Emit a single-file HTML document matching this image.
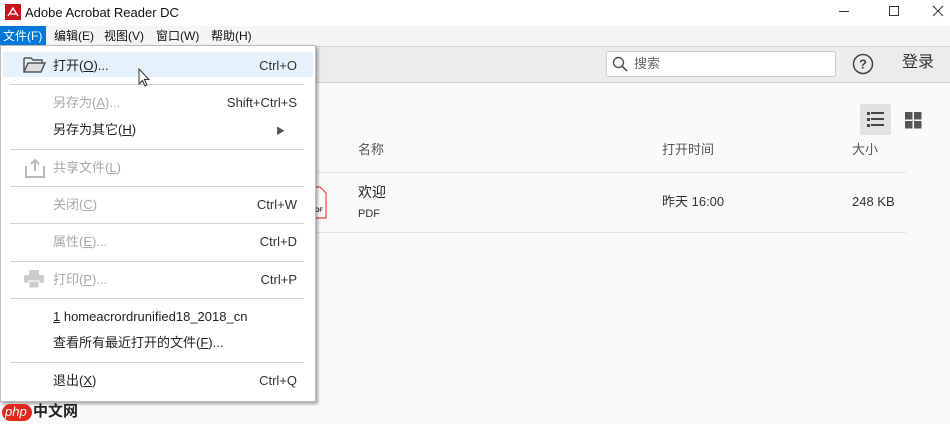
<!DOCTYPE html>
<html><head><meta charset="utf-8">
<style>
*{margin:0;padding:0;box-sizing:border-box}
body{width:950px;height:424px;overflow:hidden;background:#fafafa;font-family:"Liberation Sans","Noto Sans CJK SC",sans-serif;font-size:13px;color:#222;position:relative;line-height:16px}
.abs{position:absolute}
#title{left:0;top:0;width:950px;height:26px;background:#fff}
#menubar{left:0;top:26px;width:950px;height:20px;background:#f5f5f5}
#menubar span{position:absolute;top:2px;font-size:12px;color:#111}
#tool{left:0;top:46px;width:950px;height:37px;background:#ececec;border-top:1px solid #d8d8d8;border-bottom:1px solid #d4d4d4}
.txt{position:absolute;white-space:nowrap}
#menu{left:0;top:45px;width:316px;height:357px;background:#fff;border:1px solid #bbb;box-shadow:2px 2px 3px rgba(0,0,0,.35)}
.it{position:absolute;left:52px;font-size:13px;color:#222;white-space:nowrap}
.dis{color:#a8a8a8}
.sc{position:absolute;right:18px;font-size:13px;color:#333;white-space:nowrap}
.sep{position:absolute;left:9px;width:294px;height:1px;background:#d4d4d4}
u{text-decoration:underline}
</style></head><body>
<div id="title" class="abs">
  <svg class="abs" style="left:5px;top:4px" width="16" height="16"><rect width="16" height="16" fill="#c4161c"/><path d="M3 12 L8 4 L13 12 M5 10 L11 10" stroke="#fff" stroke-width="1.3" fill="none"/></svg>
  <span class="txt" style="left:25px;top:5px;font-size:13px;color:#111">Adobe Acrobat Reader DC</span>
  <div class="abs" style="left:839px;top:11px;width:10px;height:1px;background:#333"></div>
  <div class="abs" style="left:889px;top:6px;width:10px;height:10px;border:1px solid #333"></div>
  <svg class="abs" style="left:932px;top:5px" width="12" height="12"><path d="M1 1L11 11M11 1L1 11" stroke="#333" stroke-width="1"/></svg>
</div>
<div id="menubar" class="abs">
  <div class="abs" style="left:0;top:0;width:46px;height:20px;background:#0078d7"></div>
  <span style="left:3px;color:#fff">文件(F)</span>
  <span style="left:54px">编辑(E)</span>
  <span style="left:104px">视图(V)</span>
  <span style="left:156px">窗口(W)</span>
  <span style="left:211px">帮助(H)</span>
</div>
<div id="tool" class="abs">
  <div class="abs" style="left:606px;top:4px;width:230px;height:26px;background:#fff;border:1px solid #ccc;border-radius:3px"></div>
  <svg class="abs" style="left:612px;top:9px" width="16" height="16"><circle cx="6.5" cy="6.5" r="5" stroke="#555" stroke-width="1.4" fill="none"/><path d="M10 10L15 15" stroke="#555" stroke-width="1.6"/></svg>
  <span class="txt" style="left:634px;top:9px;font-size:13px;color:#666">搜索</span>
  <svg class="abs" style="left:852px;top:6px" width="22" height="22"><circle cx="11" cy="11" r="9.5" stroke="#444" stroke-width="1.5" fill="none"/><text x="11" y="15.5" font-size="13" text-anchor="middle" fill="#444" font-family="Liberation Sans" font-weight="bold">?</text></svg>
  <span class="txt" style="left:902px;top:6px;font-size:16px;line-height:20px;color:#333">登录</span>
</div>
<!-- content -->
<div class="abs" style="left:860px;top:104px;width:31px;height:31px;background:#e2e2e2;border-radius:2px"></div>
<svg class="abs" style="left:867px;top:111px" width="17" height="17"><g fill="#444"><rect x="0" y="1" width="3" height="3"/><rect x="4" y="1" width="13" height="2"/><rect x="0" y="7" width="3" height="3"/><rect x="4" y="7" width="13" height="2"/><rect x="0" y="13" width="3" height="3"/><rect x="4" y="13" width="13" height="2"/></g></svg>
<svg class="abs" style="left:905px;top:112px" width="17" height="17"><g fill="#555"><rect x="0" y="0" width="7.5" height="7.5"/><rect x="9" y="0" width="7.5" height="7.5"/><rect x="0" y="9" width="7.5" height="7.5"/><rect x="9" y="9" width="7.5" height="7.5"/></g></svg>
<span class="txt" style="left:358px;top:142px;color:#555">名称</span>
<span class="txt" style="left:662px;top:142px;color:#555">打开时间</span>
<span class="txt" style="left:852px;top:142px;color:#555">大小</span>
<div class="abs" style="left:316px;top:172px;width:590px;height:1px;background:#e4e4e4"></div>
<div class="abs" style="left:316px;top:232px;width:590px;height:1px;background:#e4e4e4"></div>
<svg class="abs" style="left:314px;top:186px" width="14" height="34"><path d="M0 1H6L12 7V32H0" stroke="#e44" stroke-width="1.2" fill="#fff"/><text x="1" y="26" font-size="6" font-family="Liberation Sans" font-weight="bold" fill="#333">DF</text></svg>
<span class="txt" style="left:358px;top:184px;font-size:14px;color:#222">欢迎</span>
<span class="txt" style="left:358px;top:206px;font-size:11px;color:#333">PDF</span>
<span class="txt" style="left:662px;top:194px;color:#333">昨天 16:00</span>
<span class="txt" style="left:852px;top:194px;color:#333">248 KB</span>
<!-- menu -->
<div id="menu" class="abs">
  <div class="abs" style="left:2px;top:6px;width:310px;height:25px;background:#e5f1fb"></div>
  <svg class="abs" style="left:22px;top:10px" width="24" height="18"><path d="M1 2H8L10 4H19V7" stroke="#555" stroke-width="1.5" fill="none"/><path d="M1 2V16H18L22 7H5L1 16" stroke="#555" stroke-width="1.5" fill="#ddd"/></svg>
  <span class="it" style="top:12px">打开(<u>O</u>)...</span><span class="sc" style="top:12px">Ctrl+O</span>
  <div class="sep" style="top:38px"></div>
  <span class="it dis" style="top:49px">另存为(<u>A</u>)...</span><span class="sc dis" style="top:49px">Shift+Ctrl+S</span>
  <span class="it" style="top:76px">另存为其它(<u>H</u>)</span><span class="sc" style="top:77px;right:30px;font-size:9px;color:#555">▶</span>
  <div class="sep" style="top:103px"></div>
  <svg class="abs" style="left:24px;top:112px" width="20" height="20"><path d="M1 8V19H19V8" stroke="#bbb" stroke-width="2" fill="none"/><path d="M10 13V2M6 6L10 2L14 6" stroke="#bbb" stroke-width="2" fill="none"/></svg>
  <span class="it dis" style="top:114px">共享文件(<u>L</u>)</span>
  <div class="sep" style="top:140px"></div>
  <span class="it dis" style="top:151px">关闭(<u>C</u>)</span><span class="sc dis" style="top:151px">Ctrl+W</span>
  <div class="sep" style="top:177px"></div>
  <span class="it dis" style="top:188px">属性(<u>E</u>)...</span><span class="sc dis" style="top:188px">Ctrl+D</span>
  <div class="sep" style="top:215px"></div>
  <svg class="abs" style="left:23px;top:224px" width="20" height="18"><rect x="5" y="0" width="10" height="5" fill="#ccc"/><rect x="0" y="5" width="20" height="8" rx="2" fill="#ccc"/><rect x="5" y="11" width="10" height="7" fill="#ccc" stroke="#fff" stroke-width="1"/></svg>
  <span class="it dis" style="top:226px">打印(<u>P</u>)...</span><span class="sc dis" style="top:226px">Ctrl+P</span>
  <div class="sep" style="top:252px"></div>
  <span class="it" style="top:263px"><u>1</u> homeacrordrunified18_2018_cn</span>
  <span class="it" style="top:289px">查看所有最近打开的文件(<u>F</u>)...</span>
  <div class="sep" style="top:316px"></div>
  <span class="it" style="top:327px">退出(<u>X</u>)</span><span class="sc" style="top:327px">Ctrl+Q</span>
</div>
<!-- cursor -->
<svg class="abs" style="left:138px;top:68px" width="13" height="20"><path d="M1 1V16L4.5 12.5L7 18L9 17L6.5 11.5H11Z" fill="#fff" stroke="#333" stroke-width="1"/></svg>
<!-- watermark -->
<div class="abs" style="left:2px;top:404px;width:30px;height:17px;background:#e0281c;border-radius:9px"></div>
<span class="txt" style="left:5px;top:404px;font-size:13px;color:#fff;font-style:italic">php</span>
<span class="txt" style="left:33px;top:403px;font-size:15px;line-height:18px;color:#222;font-weight:bold">中文网</span>
</body></html>
